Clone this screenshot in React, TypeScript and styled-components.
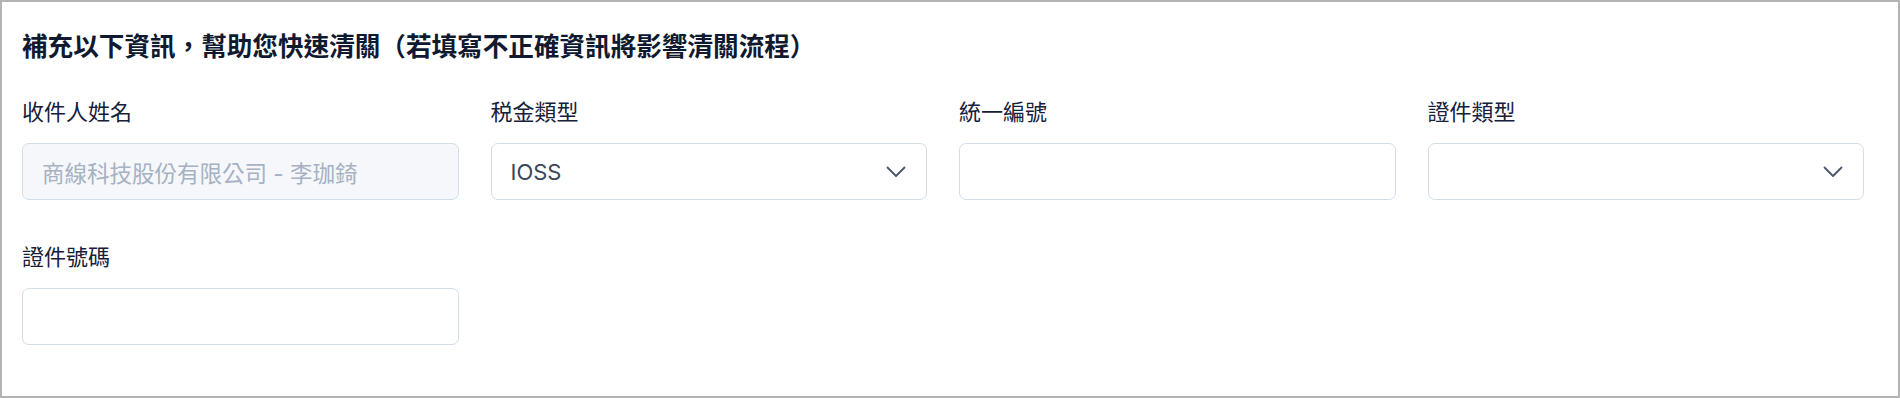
import React, { FC } from 'react';
import styled, { createGlobalStyle } from 'styled-components';

const GlobalStyle = createGlobalStyle`
  html, body {
    margin: 0;
    padding: 0;
    background: #ffffff;
  }
  * {
    box-sizing: border-box;
  }
`;

const FONT = `Inter, "Noto Sans CJK TC", "Noto Sans", sans-serif`;

const Panel = styled.section`
  width: 1900px;
  height: 398px;
  border: 2px solid #b3b3b3;
  padding: 26px 34px 0 20px;
  background: #ffffff;
  font-family: ${FONT};
`;

const Title = styled.h2`
  margin: 0 0 30px;
  font-size: 25.6px;
  line-height: 38px;
  font-weight: 700;
  color: #0f1a30;
`;

const Grid = styled.div`
  display: grid;
  grid-template-columns: repeat(4, 1fr);
  column-gap: 32px;
  row-gap: 41px;
`;

const Field = styled.div`
  display: flex;
  flex-direction: column;
  gap: 14px;
`;

const Label = styled.label`
  font-size: 22px;
  line-height: 33px;
  color: #16203a;
`;

const Box = styled.div<{ $disabled?: boolean }>`
  display: flex;
  align-items: center;
  justify-content: space-between;
  height: 57px;
  padding: 0 20px 0 19px;
  border: 1px solid #d3dde9;
  border-radius: 7px;
  background: ${(p) => (p.$disabled ? '#f5f7fa' : '#ffffff')};
  font-size: 22px;
  color: #3b4659;
`;

const Placeholder = styled.span`
  font-size: 22.5px;
  color: #a6b1c2;
`;

const Chevron = () => (
  <svg width="20" height="12" viewBox="0 0 20 12" fill="none">
    <path d="M1.5 1.5 L10 10 L18.5 1.5" stroke="#4a5568" strokeWidth="1.8" strokeLinecap="round" strokeLinejoin="round" />
  </svg>
);

type FieldProps = {
  label: string;
  value?: string;
  placeholder?: string;
  select?: boolean;
  disabled?: boolean;
};

const FormField: FC<FieldProps> = ({ label, value, placeholder, select, disabled }) => (
  <Field>
    <Label>{label}</Label>
    <Box $disabled={disabled}>
      {placeholder ? <Placeholder>{placeholder}</Placeholder> : <span>{value}</span>}
      {select && <Chevron />}
    </Box>
  </Field>
);

const App: FC = () => (
  <>
    <GlobalStyle />
    <Panel>
      <Title>{'補充以下資訊，幫助您快速清關（若填寫不正確資訊將影響清關流程）'}</Title>
      <Grid>
        <FormField label="收件人姓名" placeholder="商線科技股份有限公司 - 李珈錡" disabled />
        <FormField label="税金類型" value="IOSS" select />
        <FormField label="統一編號" />
        <FormField label="證件類型" select />
        <FormField label="證件號碼" />
      </Grid>
    </Panel>
  </>
);

export default App;
